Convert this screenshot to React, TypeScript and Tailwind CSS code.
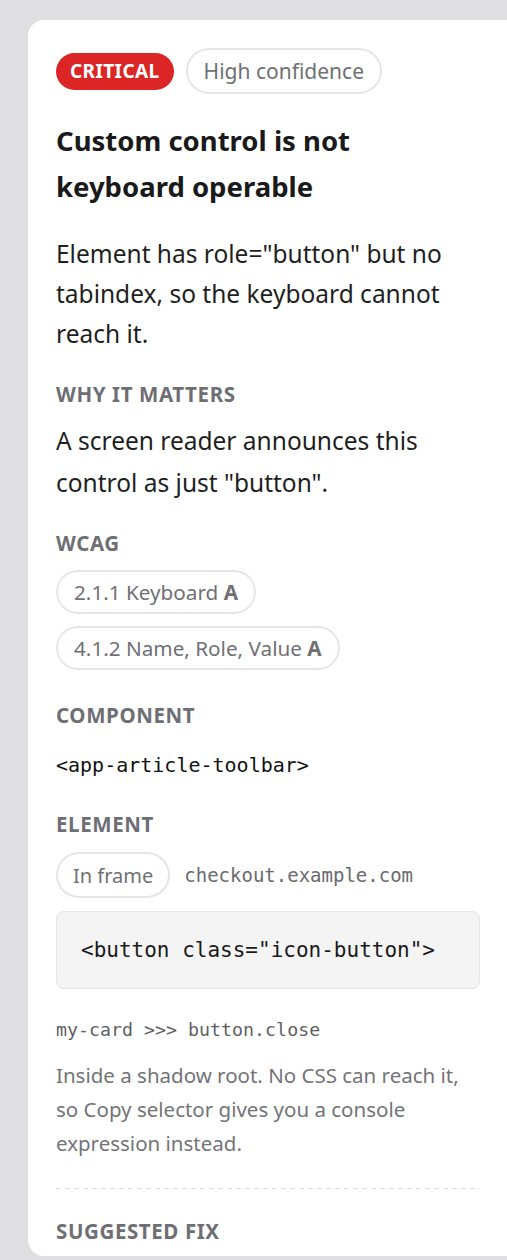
import React from "react";

const sans = "font-['Noto_Sans',sans-serif]";
const mono = "font-['DejaVu_Sans_Mono',monospace]";

const Label: React.FC<{ children: React.ReactNode; className?: string }> = ({ children, className = "" }) => (
  <div className={`text-[20.5px] leading-[28px] font-bold uppercase tracking-[0.6px] text-[#6e6e75] ${className}`}>
    {children}
  </div>
);

const Pill: React.FC<{ children: React.ReactNode; className?: string }> = ({ children, className = "" }) => (
  <span
    className={`inline-flex items-center rounded-full border-2 border-[#e6e6e6] px-[15px] pt-[2px] text-[20.7px] text-[#707075] ${className}`}
  >
    {children}
  </span>
);

const App: React.FC = () => {
  return (
    <div className={`min-h-screen w-full overflow-hidden bg-[#dfdfe1] pt-5 pl-7 ${sans}`}>
      <div className="w-[520px] rounded-2xl bg-white pl-7 pr-[68px] pt-7 pb-[11px]">
        {/* badges */}
        <div className="flex items-center gap-3">
          <span className="inline-flex h-[37px] items-center rounded-full bg-[#dc2626] px-[14px] text-[19px] font-bold tracking-[0.4px] text-white">
            CRITICAL
          </span>
          <Pill className="h-[46px] px-[16px] text-[21px]">High confidence</Pill>
        </div>

        {/* title + description */}
        <h1 className="mt-[24px] text-[27.5px] leading-[46px] font-bold text-[#1a1a1a]">
          Custom control is not keyboard operable
        </h1>
        <p className="mt-[24px] text-[24.5px] leading-[40px] text-[#1f1f1f]">
          Element has role="button" but no tabindex, so the keyboard cannot reach it.
        </p>

        <Label className="mt-[26px]">Why it matters</Label>
        <p className="mt-[12px] text-[24.5px] leading-[42px] text-[#1f1f1f]">
          A screen reader announces this control as just "button".
        </p>

        <Label className="mt-[25px]">WCAG</Label>
        <div className="mt-[13px] flex flex-col items-start gap-3">
          <Pill className="h-[44px] px-[16px]">
            2.1.1 Keyboard&nbsp;<b className="font-bold">A</b>
          </Pill>
          <Pill className="h-[44px] px-[16px]">
            4.1.2 Name, Role, Value&nbsp;<b className="font-bold">A</b>
          </Pill>
        </div>

        <Label className="mt-[31px]">Component</Label>
        <div className={`mt-[21px] text-[20px] leading-[30px] text-[#111] ${mono}`}>&lt;app-article-toolbar&gt;</div>

        <Label className="mt-[30px]">Element</Label>
        <div className="mt-[14px] flex items-center gap-[14px]">
          <Pill className="h-[46px] px-[15px] text-[20px]">In frame</Pill>
          <span className={`text-[19px] text-[#6a6a6f] ${mono}`}>checkout.example.com</span>
        </div>
        <div className="mt-[13px] rounded-lg border border-[#e4e4e4] bg-[#f4f4f4] px-6 py-[23px]">
          <code className={`block text-[21px] leading-[30px] text-[#1a1a1a] ${mono}`}>
            &lt;button class="icon-button"&gt;
          </code>
        </div>

        <div className={`mt-[28px] text-[18.3px] leading-[26px] text-[#5f5f64] ${mono}`}>my-card &gt;&gt;&gt; button.close</div>
        <p className="mt-[15px] text-[20.5px] leading-[34px] text-[#737378]">
          Inside a shadow root. No CSS can reach it, so Copy selector gives you a console expression instead.
        </p>

        <div className="mt-[28px] h-px bg-[linear-gradient(to_right,#d9d9d9_5px,transparent_5px)] bg-[length:9px_1px]" />

        <Label className="mt-[28px]">Suggested fix</Label>
      </div>
    </div>
  );
};

export default App;
